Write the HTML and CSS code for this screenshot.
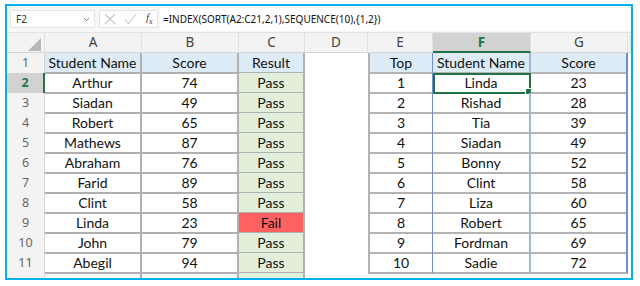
FILE: index.html
```html
<!DOCTYPE html>
<html lang="en">
<head>
    <meta charset="UTF-8">
    <title>Sort by score</title>
    <link rel="stylesheet" href="styles.css">
</head>
<body>
    <div class="frame">
        <div class="formula-bar">
            <div class="name-box">
                <span>F2</span>
                <svg class="chev" width="7" height="5" viewBox="0 0 7 5"><path d="M1 1.2 L3.5 3.6 L6 1.2" fill="none" stroke="#777" stroke-width="1"/></svg>
            </div>
            <div class="fx-box">
                <svg width="12" height="12" viewBox="0 0 12 12"><path d="M1 1 L11 11 M11 1 L1 11" stroke="#c6c6c6" stroke-width="1.1" fill="none"/></svg>
                <svg width="13" height="12" viewBox="0 0 13 12"><path d="M1 6.5 L4.5 10.5 L12 1.5" stroke="#c6c6c6" stroke-width="1.1" fill="none"/></svg>
                <span class="fx">f<sub>x</sub></span>
            </div>
            <div class="formula">=INDEX(SORT(A2:C21,2,1),SEQUENCE(10),{1,2})</div>
        </div>

        <div class="row col-heads">
            <div class="corner"><span class="tri"></span></div>
            <div>A</div>
            <div>B</div>
            <div>C</div>
            <div>D</div>
            <div>E</div>
            <div class="active-col">F</div>
            <div>G</div>
            <div></div>
        </div>

        <div class="row">
            <div class="rh">1</div>
            <div class="t1 head">Student Name</div>
            <div class="t1 head">Score</div>
            <div class="t1 head">Result</div>
            <div class="gap"></div>
            <div class="t2 head first">Top</div>
            <div class="t2 head mid">Student Name</div>
            <div class="t2 head last">Score</div>
            <div></div>
        </div>
        <div class="row">
            <div class="rh active-row">2</div>
            <div class="t1">Arthur</div>
            <div class="t1">74</div>
            <div class="t1 pass">Pass</div>
            <div class="gap"></div>
            <div class="t2 first">1</div>
            <div class="t2 mid selected">Linda<span class="handle"></span></div>
            <div class="t2 last">23</div>
            <div></div>
        </div>
        <div class="row">
            <div class="rh">3</div>
            <div class="t1">Siadan</div>
            <div class="t1">49</div>
            <div class="t1 pass">Pass</div>
            <div class="gap"></div>
            <div class="t2 first">2</div>
            <div class="t2 mid">Rishad</div>
            <div class="t2 last">28</div>
            <div></div>
        </div>
        <div class="row">
            <div class="rh">4</div>
            <div class="t1">Robert</div>
            <div class="t1">65</div>
            <div class="t1 pass">Pass</div>
            <div class="gap"></div>
            <div class="t2 first">3</div>
            <div class="t2 mid">Tia</div>
            <div class="t2 last">39</div>
            <div></div>
        </div>
        <div class="row">
            <div class="rh">5</div>
            <div class="t1">Mathews</div>
            <div class="t1">87</div>
            <div class="t1 pass">Pass</div>
            <div class="gap"></div>
            <div class="t2 first">4</div>
            <div class="t2 mid">Siadan</div>
            <div class="t2 last">49</div>
            <div></div>
        </div>
        <div class="row">
            <div class="rh">6</div>
            <div class="t1">Abraham</div>
            <div class="t1">76</div>
            <div class="t1 pass">Pass</div>
            <div class="gap"></div>
            <div class="t2 first">5</div>
            <div class="t2 mid">Bonny</div>
            <div class="t2 last">52</div>
            <div></div>
        </div>
        <div class="row">
            <div class="rh">7</div>
            <div class="t1">Farid</div>
            <div class="t1">89</div>
            <div class="t1 pass">Pass</div>
            <div class="gap"></div>
            <div class="t2 first">6</div>
            <div class="t2 mid">Clint</div>
            <div class="t2 last">58</div>
            <div></div>
        </div>
        <div class="row">
            <div class="rh">8</div>
            <div class="t1">Clint</div>
            <div class="t1">58</div>
            <div class="t1 pass">Pass</div>
            <div class="gap"></div>
            <div class="t2 first">7</div>
            <div class="t2 mid">Liza</div>
            <div class="t2 last">60</div>
            <div></div>
        </div>
        <div class="row">
            <div class="rh">9</div>
            <div class="t1">Linda</div>
            <div class="t1">23</div>
            <div class="t1 fail">Fail</div>
            <div class="gap"></div>
            <div class="t2 first">8</div>
            <div class="t2 mid">Robert</div>
            <div class="t2 last">65</div>
            <div></div>
        </div>
        <div class="row">
            <div class="rh">10</div>
            <div class="t1">John</div>
            <div class="t1">79</div>
            <div class="t1 pass">Pass</div>
            <div class="gap"></div>
            <div class="t2 first">9</div>
            <div class="t2 mid">Fordman</div>
            <div class="t2 last">69</div>
            <div></div>
        </div>
        <div class="row">
            <div class="rh">11</div>
            <div class="t1">Abegil</div>
            <div class="t1">94</div>
            <div class="t1 pass">Pass</div>
            <div class="gap"></div>
            <div class="t2 first">10</div>
            <div class="t2 mid">Sadie</div>
            <div class="t2 last">72</div>
            <div></div>
        </div>
        <div class="row">
            <div class="rh"></div>
            <div class="t1"></div>
            <div class="t1"></div>
            <div class="t1 pass"></div>
            <div class="gap"></div>
            <div></div>
            <div></div>
            <div></div>
            <div></div>
        </div>
    </div>
</body>
</html>
```

FILE: styles.css
```css
body {
    margin: 0;
    background: #ffffff;
    font-family: 'Lato', 'Open Sans', sans-serif;
}

.frame {
    margin: 4px 0 0 5px;
    width: 628px;
    height: 276px;
    box-sizing: border-box;
    border: 2px solid #00b0f0;
    overflow: hidden;
    background: #ffffff;
}

/* formula bar */
.formula-bar {
    display: flex;
    align-items: center;
    height: 27px;
    padding: 0 0 0 3px;
    box-sizing: border-box;
    background: #f7f7f7;
    border-bottom: 1px solid #e2e2e2;
    font-family: 'Noto Sans', 'Open Sans', sans-serif;
    font-size: 10px;
    color: #333;
}

.name-box {
    display: flex;
    align-items: center;
    justify-content: space-between;
    width: 85px;
    height: 18px;
    box-sizing: border-box;
    padding: 0 4px 0 5px;
    background: #fff;
    border: 1px solid #e3e3e3;
}

.fx-box {
    display: flex;
    align-items: center;
    gap: 8px;
    margin-left: 4px;
    width: 59px;
    height: 18px;
    box-sizing: border-box;
    padding: 0 0 0 4px;
    background: #fff;
    border: 1px solid #e3e3e3;
}

.fx {
    font-family: 'Liberation Serif', serif;
    font-style: italic;
    font-size: 11px;
    color: #444;
    margin-left: 1px;
}

.fx sub {
    font-size: 8px;
}

.formula {
    flex: 1;
    height: 23px;
    line-height: 22px;
    margin-left: 2px;
    padding-left: 3px;
    background: #fff;
    color: #111;
}

/* grid rows */
.row {
    display: grid;
    grid-template-columns: 38px 97px 97px 66px 63px 65px 98px 97px 1fr;
    height: 20px;
    font-size: 14px;
    line-height: 19px;
    color: #111;
    text-align: center;
}

.row > div {
    box-sizing: border-box;
    position: relative;
}

.col-heads {
    height: 19px;
    background: #f3f3f3;
    border-bottom: 1px solid #d6d6d6;
    font-family: 'Noto Sans', 'Open Sans', sans-serif;
    font-size: 13.5px;
    line-height: 18px;
    color: #444;
}

.col-heads > div {
    border-right: 1px solid #e0e0e0;
}

.corner .tri {
    position: absolute;
    right: 3px;
    bottom: 2px;
    width: 0;
    height: 0;
    border-left: 13px solid transparent;
    border-bottom: 13px solid #b9b9b9;
}

.active-col {
    background: #d2d2d2;
    color: #217346;
    font-weight: bold;
    border-bottom: 2px solid #217346;
}

.rh {
    background: #f3f3f3;
    border-bottom: 1px solid #dedede;
    border-right: 1px solid #d6d6d6;
    font-family: 'Noto Sans', 'Open Sans', sans-serif;
    font-size: 12.5px;
    color: #666;
}

.active-row {
    background: #d2d2d2;
    color: #217346;
    font-weight: bold;
    border-right: 2px solid #217346;
}

/* table A1:C */
.t1 {
    border-right: 2px solid #b0b0b0;
    border-bottom: 2px solid #b0b0b0;
}

.head {
    background: #ddebf7;
}

.pass {
    background: #e2efda;
}

.fail {
    background: #ff6161;
}

.gap {
    background: #fff;
}

/* table E1:G11 */
.t2 {
    border-bottom: 2px solid #b3b3b3;
}

.t2.first {
    border-left: 2px solid #b3b3b3;
    border-right: 1px solid #6f8fd0;
}

.t2.mid {
    border-right: 2px solid #a6b4cf;
}

.t2.last {
    border-right: 2px solid #6f8fd0;
}

.selected {
    outline: 2px solid #217346;
    outline-offset: -2px;
}

.handle {
    position: absolute;
    right: -3px;
    bottom: -3px;
    width: 5px;
    height: 5px;
    background: #217346;
    border: 1px solid #fff;
}
```
